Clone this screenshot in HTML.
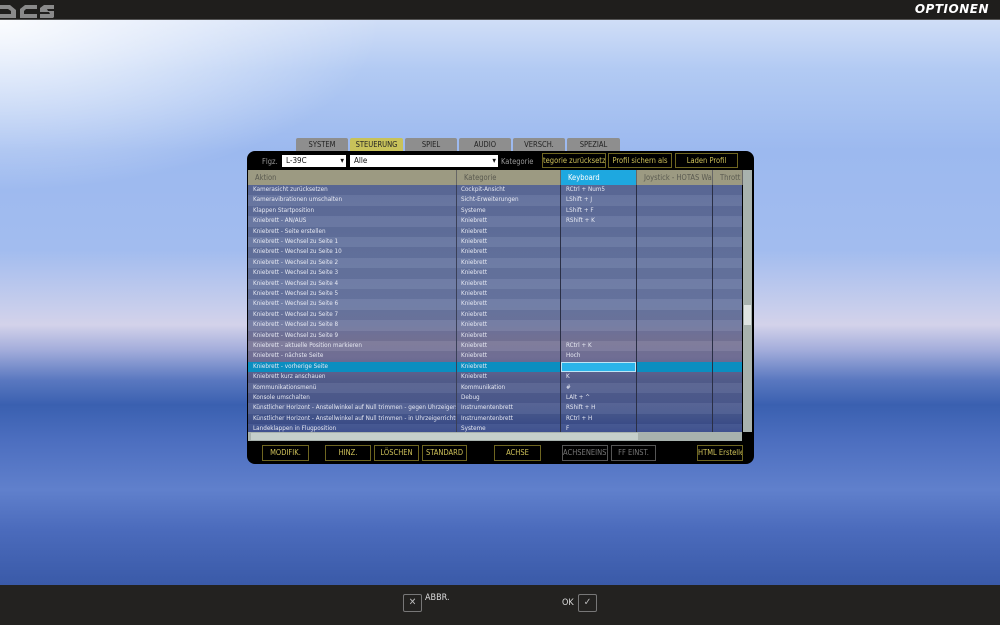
<!DOCTYPE html>
<html><head><meta charset="utf-8"><style>
*{margin:0;padding:0;box-sizing:border-box}
body{width:1000px;height:625px;overflow:hidden;font-family:"DejaVu Sans Condensed","DejaVu Sans","Liberation Sans",sans-serif;position:relative;
background:linear-gradient(180deg,#d0def7 20px,#b2caf3 70px,#9cb9ef 150px,#a2bcef 250px,#c6cdec 305px,#d3d2ea 325px,#a3addb 350px,#5a78c0 380px,#3a60b0 405px,#4c6ebf 440px,#6080cc 490px,#4b6bbc 530px,#3a5aa8 585px);}
.glow{position:absolute;left:0;top:20px;width:1000px;height:260px;background:radial-gradient(ellipse 380px 170px at 0 0,rgba(255,255,255,.9),rgba(255,255,255,0));}
.top{position:absolute;left:0;top:0;width:1000px;height:20px;background:#1f1e1c;border-bottom:1px solid #555}
.top .t{position:absolute;right:11px;top:2px;color:#fff;font-family:"DejaVu Sans",sans-serif;font-weight:bold;font-style:italic;font-size:12px;letter-spacing:.5px}
.bot{position:absolute;left:0;top:585px;width:1000px;height:40px;background:#232220}
.box{position:absolute;width:19px;height:18px;border:1px solid #777;border-radius:2px;color:#bbb;font-size:10px;text-align:center;line-height:16px}
.lbl{position:absolute;color:#ddd;font-size:9px}
.tab{position:absolute;top:138px;height:13px;background:#8e8e8e;color:#222;font-size:7.5px;text-align:center;line-height:13px;border-radius:2px 2px 0 0}
.win{position:absolute;left:247px;top:151px;width:507px;height:313px;background:#000;border-radius:8px}
.sel{position:absolute;top:155px;height:12px;background:#fff;font-size:8px;line-height:12px;padding-left:4px;color:#111}
.sel:after{content:"▾";position:absolute;right:2px;font-size:8px}
.yb{position:absolute;border:1px solid #6e6520;color:#cfc25a;font-size:7.5px;text-align:center;white-space:nowrap;overflow:hidden}
.hdr{position:absolute;top:170px;height:15px;background:#9c9a82;color:#5a5a50;font-size:7.5px;line-height:15px;padding-left:7px;border-right:1px solid #666;white-space:nowrap;overflow:hidden}
.row{position:absolute;left:248px;width:494px;height:10.4px;font-size:6.3px;color:#e6e8f2;line-height:10.4px;white-space:nowrap}
.row span{position:absolute;top:0;overflow:hidden}
.vl{position:absolute;top:185px;height:247px;width:1px;background:#2a2f45}
</style></head><body>
<div class="glow"></div>
<div class="top"><svg width="54" height="20" style="position:absolute;left:0;top:0"><path d="M0 5h10l6 5v8H0v-4h11v-3l-3-2H0z M20 18V9l5-4h12v4H26l-2 2v3h13v4z M40 18v-4h10l-1-2h-9V8l4-3h12v4H47l1 2h9v3l-4 4z" fill="#8a8a8a"/></svg><div class="t">OPTIONEN</div></div>

<div class="tab" style="left:296px;width:52px">SYSTEM</div>
<div class="tab" style="left:350px;width:53px;background:#c8c25a">STEUERUNG</div>
<div class="tab" style="left:405px;width:52px">SPIEL</div>
<div class="tab" style="left:459px;width:52px">AUDIO</div>
<div class="tab" style="left:513px;width:52px">VERSCH.</div>
<div class="tab" style="left:567px;width:53px">SPEZIAL</div>

<div class="win"></div>
<div class="lbl" style="left:262px;top:157px;font-size:7.5px;color:#999">Flgz.</div>
<div class="sel" style="left:282px;width:64px">L-39C</div>
<div class="sel" style="left:350px;width:148px">Alle</div>
<div class="lbl" style="left:501px;top:157px;font-size:7.5px;color:#999">Kategorie</div>
<div class="yb" style="left:542px;top:153px;width:64px;height:15px;line-height:13px">tegorie zurücksetz</div>
<div class="yb" style="left:608px;top:153px;width:64px;height:15px;line-height:13px">Profil sichern als</div>
<div class="yb" style="left:675px;top:153px;width:63px;height:15px;line-height:13px">Laden Profil</div>

<div style="position:absolute;left:248px;top:185px;width:494px;height:247px;background:linear-gradient(180deg,#5d6c99 0,#6574a0 60px,#6b79a3 120px,#6f78a0 140px,#7a7697 158px,#76749a 172px,#56608f 195px,#505d90 215px,#46588f 232px,#35488a 247px)"></div>
<div class="hdr" style="left:248px;width:209px">Aktion</div>
<div class="hdr" style="left:457px;width:104px">Kategorie</div>
<div class="hdr" style="left:561px;width:76px;background:#1ea8e0;color:#fff">Keyboard</div>
<div class="hdr" style="left:637px;width:76px">Joystick - HOTAS Wa</div>
<div class="hdr" style="left:713px;width:30px">Thrott</div>
<div style="position:absolute;left:743px;top:170px;width:9px;height:262px;background:#a8b2ae"></div>
<div style="position:absolute;left:744px;top:305px;width:7px;height:20px;background:#dfe4e2"></div>

<div id="rows"></div>
<script>
var d=[["Kamerasicht zurücksetzen","Cockpit-Ansicht","RCtrl + Num5"],["Kameravibrationen umschalten","Sicht-Erweiterungen","LShift + J"],["Klappen Startposition","Systeme","LShift + F"],["Kniebrett - AN/AUS","Kniebrett","RShift + K"],["Kniebrett - Seite erstellen","Kniebrett",""],["Kniebrett - Wechsel zu Seite 1","Kniebrett",""],["Kniebrett - Wechsel zu Seite 10","Kniebrett",""],["Kniebrett - Wechsel zu Seite 2","Kniebrett",""],["Kniebrett - Wechsel zu Seite 3","Kniebrett",""],["Kniebrett - Wechsel zu Seite 4","Kniebrett",""],["Kniebrett - Wechsel zu Seite 5","Kniebrett",""],["Kniebrett - Wechsel zu Seite 6","Kniebrett",""],["Kniebrett - Wechsel zu Seite 7","Kniebrett",""],["Kniebrett - Wechsel zu Seite 8","Kniebrett",""],["Kniebrett - Wechsel zu Seite 9","Kniebrett",""],["Kniebrett - aktuelle Position markieren","Kniebrett","RCtrl + K"],["Kniebrett - nächste Seite","Kniebrett","Hoch"],["Kniebrett - vorherige Seite","Kniebrett",""],["Kniebrett kurz anschauen","Kniebrett","K"],["Kommunikationsmenü","Kommunikation","#"],["Konsole umschalten","Debug","LAlt + ^"],["Künstlicher Horizont - Anstellwinkel auf Null trimmen - gegen Uhrzeigersinn","Instrumentenbrett","RShift + H"],["Künstlicher Horizont - Anstellwinkel auf Null trimmen - in Uhrzeigerrichtung","Instrumentenbrett","RCtrl + H"],["Landeklappen in Flugposition","Systeme","F"]];
var h="";for(var i=0;i<d.length;i++){var y=185+i*10.4;var hh=i==23?247-i*10.4:10.4;var bg=i==17?"background:#0b8ec0":(i%2?"background:rgba(255,255,255,.05)":"background:rgba(0,0,30,.05)");
h+='<div class="row" style="top:'+y+'px;height:'+hh+'px;overflow:hidden;'+bg+'"><span style="left:5px;width:203px">'+d[i][0]+'</span><span style="left:213px">'+d[i][1]+'</span><span style="left:318px">'+d[i][2]+'</span>'+(i==17?'<span style="left:313px;width:75px;height:10px;background:#2bb4ea;border:1px solid #bfe6f6"></span>':'')+'</div>';}
document.getElementById("rows").innerHTML=h;
</script>
<div class="vl" style="left:456px;background:#3a4058"></div>
<div class="vl" style="left:560px"></div>
<div class="vl" style="left:636px"></div>
<div class="vl" style="left:712px"></div>
<div style="position:absolute;left:248px;top:432px;width:494px;height:9px;background:#a8b2ae"></div>
<div style="position:absolute;left:251px;top:433px;width:387px;height:7px;background:#c5cfcb"></div>

<div class="yb" style="left:262px;top:445px;width:47px;height:16px;line-height:14px">MODIFIK.</div>
<div class="yb" style="left:325px;top:445px;width:46px;height:16px;line-height:14px">HINZ.</div>
<div class="yb" style="left:374px;top:445px;width:45px;height:16px;line-height:14px">LÖSCHEN</div>
<div class="yb" style="left:422px;top:445px;width:45px;height:16px;line-height:14px">STANDARD</div>
<div class="yb" style="left:494px;top:445px;width:47px;height:16px;line-height:14px">ACHSE</div>
<div class="yb" style="left:562px;top:445px;width:46px;height:16px;line-height:14px;border-color:#555;color:#777">ACHSENEINST</div>
<div class="yb" style="left:611px;top:445px;width:45px;height:16px;line-height:14px;border-color:#555;color:#777">FF EINST.</div>
<div class="yb" style="left:697px;top:445px;width:46px;height:16px;line-height:14px">HTML Erstellen</div>

<div class="bot"></div>
<div class="box" style="left:403px;top:594px">✕</div>
<div class="lbl" style="left:425px;top:593px">ABBR.</div>
<div class="lbl" style="left:562px;top:598px">OK</div>
<div class="box" style="left:578px;top:594px">✓</div>
</body></html>
